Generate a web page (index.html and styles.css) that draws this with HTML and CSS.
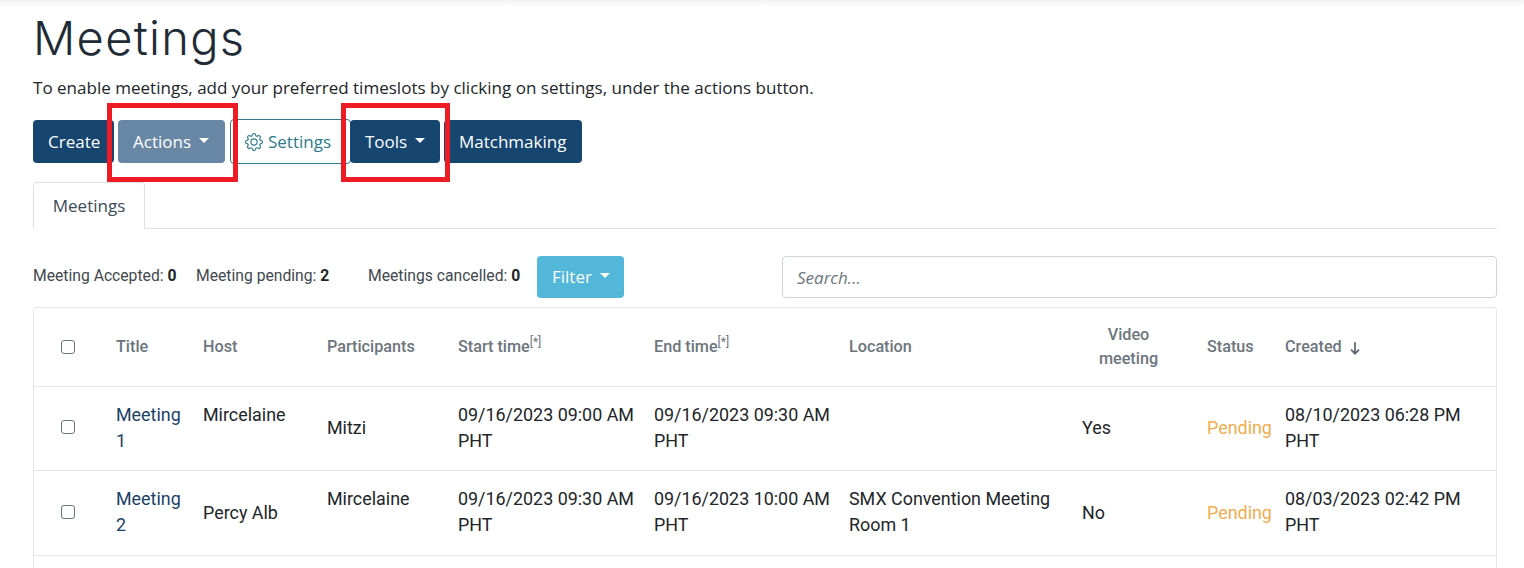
FILE: index.html
```html
<!DOCTYPE html>
<html lang="en">
<head>
<meta charset="utf-8">
<title>Meetings</title>
<link rel="stylesheet" href="styles.css">
</head>
<body>
<div class="topshade"></div>
<main class="page">
  <h1 class="title">Meetings</h1>
  <p class="intro">To enable meetings, add your preferred timeslots by clicking on settings, under the actions button.</p>
  <div class="toolbar">
    <button class="btn btn-navy btn-create">Create</button>
    <button class="btn btn-muted btn-actions">Actions<span class="caret"></span></button>
    <button class="btn btn-outline">
      <svg class="gear" viewBox="0 0 16 16" width="18" height="18" fill="currentColor"><path d="M8 4.754a3.246 3.246 0 1 0 0 6.492 3.246 3.246 0 0 0 0-6.492zM5.754 8a2.246 2.246 0 1 1 4.492 0 2.246 2.246 0 0 1-4.492 0z"/><path d="M9.796 1.343c-.527-1.79-3.065-1.79-3.592 0l-.094.319a.873.873 0 0 1-1.255.52l-.292-.16c-1.64-.892-3.433.902-2.54 2.541l.159.292a.873.873 0 0 1-.52 1.255l-.319.094c-1.79.527-1.79 3.065 0 3.592l.319.094a.873.873 0 0 1 .52 1.255l-.16.292c-.892 1.64.901 3.434 2.541 2.54l.292-.159a.873.873 0 0 1 1.255.52l.094.319c.527 1.79 3.065 1.79 3.592 0l.094-.319a.873.873 0 0 1 1.255-.52l.292.16c1.64.893 3.434-.902 2.54-2.541l-.159-.292a.873.873 0 0 1 .52-1.255l.319-.094c1.79-.527 1.79-3.065 0-3.592l-.319-.094a.873.873 0 0 1-.52-1.255l.16-.292c.893-1.64-.902-3.433-2.541-2.54l-.292.159a.873.873 0 0 1-1.255-.52l-.094-.319zm-2.633.283c.246-.835 1.428-.835 1.674 0l.094.319a1.873 1.873 0 0 0 2.693 1.115l.291-.16c.764-.415 1.6.42 1.184 1.185l-.159.292a1.873 1.873 0 0 0 1.116 2.692l.318.094c.835.246.835 1.428 0 1.674l-.319.094a1.873 1.873 0 0 0-1.115 2.693l.16.291c.415.764-.42 1.6-1.185 1.184l-.291-.159a1.873 1.873 0 0 0-2.693 1.116l-.094.318c-.246.835-1.428.835-1.674 0l-.094-.319a1.873 1.873 0 0 0-2.692-1.115l-.292.16c-.764.415-1.6-.42-1.184-1.185l.159-.291A1.873 1.873 0 0 0 1.945 8.93l-.319-.094c-.835-.246-.835-1.428 0-1.674l.319-.094A1.873 1.873 0 0 0 3.06 4.377l-.16-.292c-.415-.764.42-1.6 1.185-1.184l.292.159a1.873 1.873 0 0 0 2.692-1.115l.094-.319z"/></svg>
      Settings
    </button>
    <button class="btn btn-navy btn-tools">Tools<span class="caret"></span></button>
    <button class="btn btn-navy btn-match">Matchmaking</button>
    <span class="mark mark-actions"></span>
    <span class="mark mark-tools"></span>
  </div>
  <nav class="tabs"><span class="tab">Meetings</span></nav>
  <div class="filters">
    <span class="stat stat-a">Meeting Accepted: <b>0</b></span>
    <span class="stat stat-p">Meeting pending: <b>2</b></span>
    <span class="stat stat-c">Meetings cancelled: <b>0</b></span>
    <button class="btn btn-filter">Filter<span class="caret"></span></button>
    <input class="search" type="text" placeholder="Search...">
  </div>
  <div class="tablewrap">
    <table class="meetings">
      <colgroup>
        <col class="c-check"><col class="c-title"><col class="c-host"><col class="c-part"><col class="c-start"><col class="c-end"><col class="c-loc"><col class="c-video"><col class="c-status"><col class="c-created">
      </colgroup>
      <thead>
        <tr>
          <th class="cb"><span class="box"></span></th>
          <th>Title</th>
          <th>Host</th>
          <th>Participants</th>
          <th>Start time<sup>[*]</sup></th>
          <th>End time<sup>[*]</sup></th>
          <th>Location</th>
          <th class="center">Video meeting</th>
          <th>Status</th>
          <th>Created
            <svg class="arrow" viewBox="0 0 12 14" width="14" height="16"><path d="M6 2v10M2.5 8.5 6 12l3.5-3.5" fill="none" stroke="currentColor" stroke-width="1.5"/></svg>
          </th>
        </tr>
      </thead>
      <tbody>
        <tr class="row-1">
          <td class="cb"><span class="box"></span></td>
          <td class="top"><a class="link">Meeting 1</a></td>
          <td class="top">Mircelaine</td>
          <td class="mid">Mitzi</td>
          <td class="top date">09/16/2023 09:00 AM PHT</td>
          <td class="top date">09/16/2023 09:30 AM PHT</td>
          <td class="top"></td>
          <td class="mid">Yes</td>
          <td class="mid pending">Pending</td>
          <td class="top">08/10/2023 06:28 PM PHT</td>
        </tr>
        <tr class="row-2">
          <td class="cb"><span class="box"></span></td>
          <td class="top"><a class="link">Meeting 2</a></td>
          <td>Percy Alb</td>
          <td class="top">Mircelaine</td>
          <td class="top date">09/16/2023 09:30 AM PHT</td>
          <td class="top date">09/16/2023 10:00 AM PHT</td>
          <td class="top">SMX Convention Meeting Room 1</td>
          <td>No</td>
          <td class="pending">Pending</td>
          <td class="top">08/03/2023 02:42 PM PHT</td>
        </tr>
      </tbody>
    </table>
  </div>
</main>
</body>
</html>
```
FILE: styles.css
```css
* { box-sizing: border-box; }
html, body { margin: 0; height: 568px; overflow: hidden; background: #fff; }
body { font-family: "Open Sans", sans-serif; color: #212b36; position: relative; }
.topshade { position: absolute; top: 0; left: 0; right: 0; height: 7px; background: linear-gradient(#f3f3f3, #fff); }
.page { padding: 10px 27px 0 33px; position: relative; }
.title { margin: 0; font: 300 47px/56px Inter, sans-serif; letter-spacing: 1.3px; color: #212b36; }
.intro { margin: 10px 0 0; font-size: 17.05px; line-height: 24px; color: #212529; height: 24px; }
.toolbar { margin-top: 20px; display: flex; align-items: flex-start; height: 44px; position: relative; }
.btn { font: 400 17px/24px "Open Sans", sans-serif; height: 43px; border: 0; border-radius: 4px; padding: 0 15px; color: #fff; display: inline-flex; align-items: center; white-space: nowrap; }
.btn-navy { background: #164570; }
.btn-muted { background: #6887a4; }
.btn-create { width: 81px; margin-right: 4px; }
.btn-actions { width: 107px; margin-right: 5px; }
.btn-outline { background: #fff; width: 121px; height: 45px; margin-top: -1px; border: 1px solid #2c7a8c; color: #2c7a8c; padding: 0 0 0 14px; gap: 5px; margin-right: -1px; }
.gear { flex: none; margin-top: 1px; }
.btn-tools { width: 90px; margin-right: 4px; position: relative; }
.btn-match { width: 138px; }
.caret { display: inline-block; margin-left: 8px; margin-top: -3px; border-top: 5px solid #fff; border-left: 5px solid transparent; border-right: 5px solid transparent; }
.mark { position: absolute; top: -17px; height: 79px; border: 5px solid #ed1c24; pointer-events: none; }
.mark-actions { left: 74px; width: 131px; }
.mark-tools { left: 308px; width: 109px; }
.tabs { margin-top: 18px; height: 47px; border-bottom: 1px solid #dee2e6; }
.tab { display: block; width: 112px; height: 47px; border: 1px solid #dee2e6; border-bottom-color: #fff; border-radius: 4px 4px 0 0; background: #fff; text-align: center; font-size: 17px; line-height: 45px; color: #3a4a5a; }
.filters { position: relative; height: 42px; margin-top: 27px; }
.stat { position: absolute; top: 8px; font: 400 15.7px/24px Roboto, sans-serif; color: #3f4850; white-space: nowrap; }
.stat b { font-weight: 700; color: #212529; }
.stat-a { left: 0; }
.stat-p { left: 163px; }
.stat-c { left: 335px; }
.btn-filter { position: absolute; left: 504px; top: 0; width: 87px; height: 42px; background: #52b7d8; }
.search { position: absolute; left: 749px; top: 0; width: 715px; height: 42px; border: 1px solid #ced4da; border-radius: 4px; padding: 0 14px; font: italic 400 17px "Open Sans", sans-serif; color: #495057; }
.search::placeholder { color: #6c757d; opacity: 1; }
.tablewrap { margin-top: 9px; width: 1464px; height: 280px; border: 1px solid #e3e6e9; border-bottom: 0; border-radius: 4px 4px 0 0; }
.meetings { width: 1462px; table-layout: fixed; border-collapse: collapse; font: 400 17.9px/26px Roboto, sans-serif; color: #212529; }
.c-check { width: 70px; } .c-title { width: 87px; } .c-host { width: 124px; } .c-part { width: 131px; } .c-start { width: 196px; } .c-end { width: 195px; } .c-loc { width: 233px; } .c-video { width: 125px; } .c-status { width: 78px; }
.meetings th, .meetings td { padding: 13px 12px; text-align: left; vertical-align: middle; border-bottom: 1px solid #e3e6e9; }
.meetings th { font-weight: 500; font-size: 16.2px; line-height: 24px; color: #6c757d; height: 78px; padding-top: 15px; padding-bottom: 14px; }
.meetings th.center { text-align: center; padding-right: 20px; padding-left: 12px; }
.meetings th.cb, .meetings td.cb { padding: 0 0 0 27px; }
.meetings td.top { vertical-align: top; }
.row-1 td { height: 84px; padding-top: 15px; padding-bottom: 14px; }
.row-2 td { height: 85px; padding-top: 15px; padding-bottom: 14px; }
.meetings td.date { padding-right: 4px; }
.meetings .row-1 td.mid { padding-top: 14px; padding-bottom: 15px; }
.meetings sup { font-size: 12px; line-height: 0; font-weight: 400; }
.box { display: block; width: 14px; height: 14px; border: 1px solid #6c757d; border-radius: 3px; background: #fff; }
.meetings td.cb .box { margin-top: -2px; }
.link { color: #1b3f66; }
.pending { color: #f0ad4e; }
.arrow { vertical-align: -4px; margin-left: 2px; color: #5c6670; }
```
